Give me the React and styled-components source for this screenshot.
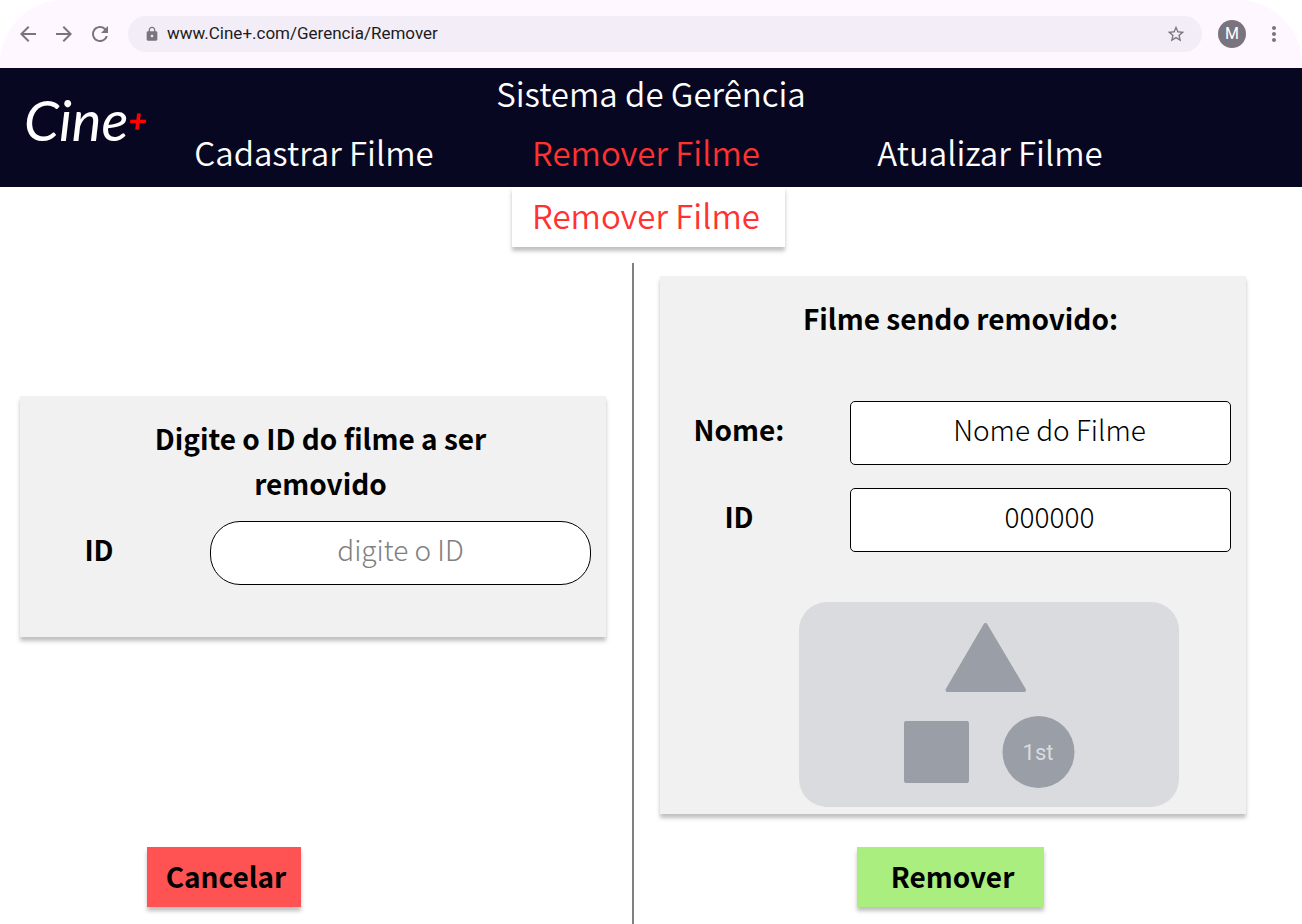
import React from "react";
import styled, { createGlobalStyle } from "styled-components";
import {
  MdArrowBack,
  MdArrowForward,
  MdRefresh,
  MdLock,
  MdStarBorder,
  MdMoreVert,
} from "react-icons/md";

const GlobalStyle = createGlobalStyle`
  * { box-sizing: border-box; }
  body {
    margin: 0;
    background: #fff;
    color: #000;
    font-family: "Noto Sans CJK JP", "Noto Sans", sans-serif;
  }
`;

const shadow = "0 4px 4px rgba(0, 0, 0, 0.25)";

const Page = styled.div`
  min-height: 100vh;
  display: flex;
  flex-direction: column;
`;

const BrowserBar = styled.div`
  height: 68px;
  padding: 0 16px;
  display: flex;
  align-items: center;
  gap: 16px;
  background: #fef7ff;
  border-radius: 64px 64px 0 0;
`;

const BrowserNav = styled.div`
  display: flex;
  gap: 12px;
`;

const IconButton = styled.button`
  display: flex;
  padding: 0;
  border: 0;
  background: none;
  color: #79747e;
  cursor: pointer;
`;

const AddressBar = styled.div`
  flex: 1;
  min-width: 0;
  height: 36px;
  padding: 0 16px;
  display: flex;
  align-items: center;
  gap: 7px;
  border-radius: 18px;
  background: #f2edf7;
  color: #79747e;
`;

const Address = styled.input`
  flex: 1;
  min-width: 0;
  padding: 0 0 2px;
  border: 0;
  outline: 0;
  background: none;
  color: #1d1b20;
  font: 17px/24px Roboto, sans-serif;
`;

const Avatar = styled.button`
  width: 28px;
  height: 28px;
  padding: 0;
  border: 0;
  border-radius: 50%;
  background: #79747e;
  color: #fff;
  font: 16px/28px Roboto, sans-serif;
`;

const Header = styled.header`
  display: grid;
  grid-template-columns: 148px 1fr 134px;
  height: 119px;
  background: #080722;
  color: #fff;
`;

const Logo = styled.a`
  display: flex;
  align-items: center;
  padding: 0 0 16px 24px;
  color: #fff;
  text-decoration: none;
  font: italic 56px/60px Lato, sans-serif;
`;

const Plus = styled.span`
  color: #f00;
  font-size: 32px;
  font-weight: 900;
`;

const displayText = `
  font-family: "Noto Sans CJK JP", sans-serif;
  font-weight: 350;
  font-size: 33px;
  line-height: 56px;
`;

const HeaderCenter = styled.div`
  display: flex;
  flex-direction: column;
  white-space: nowrap;
`;

const SystemTitle = styled.h1`
  ${displayText}
  margin: 0;
  padding-right: 14px;
  line-height: 50px;
  text-align: center;
`;

const Menu = styled.nav`
  display: grid;
  grid-template-columns: 332fr 332fr 356fr;
`;

const MenuLink = styled.a`
  ${displayText}
  line-height: 69px;
  color: ${(p) => (p.$active ? "#ff3131" : "#fff")};
  text-align: center;
  text-decoration: none;
`;

const SectionTab = styled.h2`
  ${displayText}
  align-self: center;
  width: 273px;
  margin: 0 5px 16px 0;
  padding: 0 5px 4px 0;
  background: #fff;
  box-shadow: ${shadow};
  color: #ff3131;
  text-align: center;
  white-space: nowrap;
`;

const Columns = styled.main`
  flex: 1;
  display: grid;
  grid-template-columns: minmax(0, 632fr) 2px minmax(0, 668fr);
`;

const Divider = styled.div`
  background: #808080;
`;

const Column = styled.section`
  display: flex;
  flex-direction: column;
  padding: ${(p) => p.$padding};
`;

const Panel = styled.form`
  padding: 20px 15px ${(p) => p.$bottom} 0;
  background: #f1f1f1;
  box-shadow: ${shadow};
`;

const PanelTitle = styled.h3`
  min-height: 90px;
  max-width: 360px;
  margin: 0 auto 15px;
  font-size: 28px;
  line-height: 45px;
  font-weight: 700;
  text-align: center;
`;

const TitleArea = styled.div`
  padding-left: 30px;
`;

const Field = styled.div`
  display: grid;
  grid-template-columns: 158px 1fr;
  column-gap: 32px;
  & + & {
    margin-top: 23px;
  }
`;

const Label = styled.label`
  font-size: 28px;
  line-height: 56px;
  font-weight: 700;
  text-align: center;
`;

const TextBox = styled.input`
  width: 100%;
  min-width: 0;
  height: 64px;
  padding: 0 0 8px ${(p) => (p.$round ? "0" : "18px")};
  border: 1px solid #000;
  border-radius: ${(p) => (p.$round ? "30px" : "5px")};
  background: #fff;
  color: #000;
  font-family: inherit;
  font-size: 28px;
  font-weight: 300;
  text-align: center;
  &::placeholder {
    color: #808080;
    opacity: 1;
  }
`;

const Poster = styled.svg`
  display: block;
  width: 380px;
  max-width: 100%;
  margin: 50px auto 0 139px;
`;

const ActionButton = styled.button`
  height: 60px;
  width: ${(p) => p.$width};
  margin: auto 0 0 ${(p) => p.$indent};
  padding: 0 0 2px 4px;
  border: 0;
  background: ${(p) => p.$color};
  box-shadow: ${shadow};
  color: #000;
  font-family: inherit;
  font-size: 28px;
  line-height: 58px;
  font-weight: 700;
  cursor: pointer;
`;

export default function App() {
  return (
    <Page>
      <GlobalStyle />
      <BrowserBar>
        <BrowserNav>
          <IconButton aria-label="Voltar"><MdArrowBack size={24} /></IconButton>
          <IconButton aria-label="Avançar"><MdArrowForward size={24} /></IconButton>
          <IconButton aria-label="Recarregar"><MdRefresh size={24} /></IconButton>
        </BrowserNav>
        <AddressBar>
          <MdLock size={16} />
          <Address aria-label="Endereço" defaultValue="www.Cine+.com/Gerencia/Remover" />
          <IconButton aria-label="Favoritar"><MdStarBorder size={20} /></IconButton>
        </AddressBar>
        <Avatar>M</Avatar>
        <IconButton aria-label="Mais opções"><MdMoreVert size={24} /></IconButton>
      </BrowserBar>

      <Header>
        <Logo href="#inicio">Cine<Plus>+</Plus></Logo>
        <HeaderCenter>
          <SystemTitle>Sistema de Gerência</SystemTitle>
          <Menu>
            <MenuLink href="#cadastrar">Cadastrar Filme</MenuLink>
            <MenuLink href="#remover" $active>Remover Filme</MenuLink>
            <MenuLink href="#atualizar">Atualizar Filme</MenuLink>
          </Menu>
        </HeaderCenter>
      </Header>

      <SectionTab>Remover Filme</SectionTab>

      <Columns>
        <Column $padding="133px 26px 17px 20px">
          <Panel $bottom="52px">
            <TitleArea>
              <PanelTitle>Digite o ID do filme a ser removido</PanelTitle>
            </TitleArea>
            <Field>
              <Label htmlFor="busca-id">ID</Label>
              <TextBox id="busca-id" $round placeholder="digite o ID" />
            </Field>
          </Panel>
          <ActionButton $color="#ff5252" $width="154px" $indent="127px">Cancelar</ActionButton>
        </Column>
        <Divider />
        <Column $padding="13px 56px 17px 26px">
          <Panel $bottom="7px">
            <TitleArea>
              <PanelTitle>Filme sendo removido:</PanelTitle>
            </TitleArea>
            <Field>
              <Label htmlFor="filme-nome">Nome:</Label>
              <TextBox id="filme-nome" readOnly value="Nome do Filme" />
            </Field>
            <Field>
              <Label htmlFor="filme-id">ID</Label>
              <TextBox id="filme-id" readOnly value="000000" />
            </Field>
            <Poster viewBox="0 0 380 205" role="img" aria-label="Pôster do filme">
              <rect width="380" height="205" rx="28" fill="#dadbdf" />
              <g fill="#9a9ea6" stroke="#9a9ea6" strokeWidth="4" strokeLinejoin="round">
                <path d="M186.500 23L225 88H148.500Z" />
                <rect x="107" y="121" width="61" height="58" />
              </g>
              <circle cx="239.500" cy="150" r="36" fill="#9a9ea6" />
              <text x="239" y="158" textAnchor="middle" fill="#dadbdf" fontFamily="Roboto, sans-serif" fontSize="22">1st</text>
            </Poster>
          </Panel>
          <ActionButton $color="#a9ee7e" $width="187px" $indent="197px">Remover</ActionButton>
        </Column>
      </Columns>
    </Page>
  );
}
